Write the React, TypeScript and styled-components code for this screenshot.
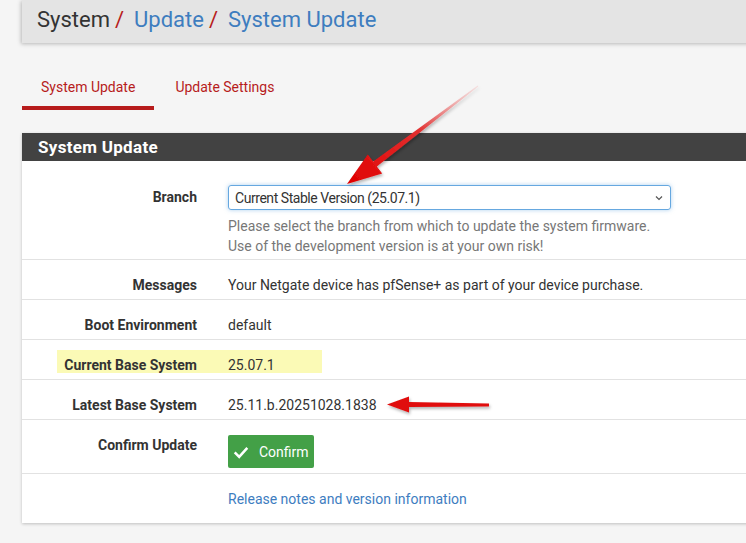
import React from "react";
import styled, { createGlobalStyle } from "styled-components";

const GlobalStyle = createGlobalStyle`
  html, body {
    margin: 0;
    padding: 0;
    background: #f5f5f5;
    font-family: Roboto, "Liberation Sans", sans-serif;
    color: #333;
    overflow: hidden;
  }
`;

const Page = styled.div`
  position: relative;
  width: 746px;
  height: 543px;
  padding-left: 22px;
  box-sizing: border-box;
`;

const Breadcrumb = styled.div`
  height: 43px;
  margin-right: -30px;
  background: #e4e4e4;
  box-shadow: -1px 1px 4px rgba(0, 0, 0, 0.25);
  display: flex;
  align-items: center;
  padding: 0 0 4px 15px;
  box-sizing: border-box;
  font-size: 22px;
`;

const Crumb = styled.span<{ $link?: boolean }>`
  color: ${(p) => (p.$link ? "#3e7dbf" : "#333")};
`;

const Slash = styled.span`
  color: #b71c1c;
  margin: 0 10px 0 5px;
`;

const Tabs = styled.div`
  display: flex;
  gap: 2px;
  margin-top: 30px;
`;

const Tab = styled.div<{ $active?: boolean }>`
  color: #b71c1c;
  font-size: 14px;
  padding: 6px 19px 11px;
  border-bottom: 4px solid ${(p) => (p.$active ? "#b71c1c" : "transparent")};
`;

const Panel = styled.div`
  margin-top: 23px;
  margin-right: -30px;
  background: #fff;
  box-shadow: 0 1px 3px rgba(0, 0, 0, 0.22);
`;

const PanelHeading = styled.div`
  background: #424242;
  color: #fff;
  height: 28px;
  display: flex;
  align-items: center;
  padding-left: 16px;
  font-size: 17px;
  font-weight: 700;
  letter-spacing: 0.3px;
`;

const Row = styled.div<{ $top: number; $bottom: number; $last?: boolean }>`
  position: relative;
  display: grid;
  grid-template-columns: 190px 1fr;
  padding: ${(p) => `${p.$top}px 0 ${p.$bottom}px`};
  border-bottom: ${(p) => (p.$last ? "none" : "1px solid #e2e2e2")};
`;

const Label = styled.div<{ $offset?: number }>`
  text-align: right;
  padding-right: 15px;
  padding-top: ${(p) => p.$offset ?? 0}px;
  font-weight: 700;
  font-size: 14px;
  line-height: 16px;
  position: relative;
`;

const Value = styled.div`
  padding-left: 16px;
  font-size: 14px;
  line-height: 16px;
  position: relative;
`;

const Highlight = styled.div`
  position: absolute;
  left: 35px;
  top: 10px;
  width: 265px;
  height: 23px;
  background: #fbfab6;
`;

const Select = styled.div`
  width: 443px;
  height: 25px;
  box-sizing: border-box;
  border: 1px solid #66a8e0;
  border-radius: 3px;
  box-shadow: 0 0 4px rgba(102, 168, 224, 0.55);
  display: flex;
  align-items: center;
  justify-content: space-between;
  padding: 0 6px;
  font-size: 14px;
  letter-spacing: -0.45px;
  color: #333;
`;

const Help = styled.div`
  margin-top: 6px;
  color: #777;
  font-size: 14px;
  line-height: 20px;
`;

const Button = styled.div`
  display: inline-flex;
  align-items: center;
  gap: 9px;
  height: 33px;
  padding: 0 5px 0 4px;
  box-sizing: border-box;
  background: #43a047;
  color: #fff;
  border-radius: 2px;
  font-size: 14px;
`;

const Link = styled.span`
  color: #3e7dbf;
  font-size: 14px;
`;

const Arrows = styled.svg`
  position: absolute;
  left: 0;
  top: 0;
  pointer-events: none;
`;

export default function App() {
  return (
    <>
      <GlobalStyle />
      <Page>
        <Breadcrumb>
          <Crumb>System</Crumb>
          <Slash>/</Slash>
          <Crumb $link>Update</Crumb>
          <Slash>/</Slash>
          <Crumb $link>System Update</Crumb>
        </Breadcrumb>

        <Tabs>
          <Tab $active>System Update</Tab>
          <Tab>Update Settings</Tab>
        </Tabs>

        <Panel>
          <PanelHeading>System Update</PanelHeading>

          <Row $top={24} $bottom={3}>
            <Label $offset={4}>Branch</Label>
            <Value>
              <Select>
                <span>Current Stable Version (25.07.1)</span>
                <svg width="10" height="10" viewBox="0 0 10 10">
                  <path d="M2 3.5 L5 6.5 L8 3.5" fill="none" stroke="#555" strokeWidth="1.2" />
                </svg>
              </Select>
              <Help>
                Please select the branch from which to update the system firmware.
                <br />
                Use of the development version is at your own risk!
              </Help>
            </Value>
          </Row>

          <Row $top={17} $bottom={6}>
            <Label>Messages</Label>
            <Value>Your Netgate device has pfSense+ as part of your device purchase.</Value>
          </Row>

          <Row $top={17} $bottom={6}>
            <Label>Boot Environment</Label>
            <Value>default</Value>
          </Row>

          <Row $top={17} $bottom={6}>
            <Highlight />
            <Label>Current Base System</Label>
            <Value>25.07.1</Value>
          </Row>

          <Row $top={17} $bottom={6}>
            <Label>Latest Base System</Label>
            <Value>25.11.b.20251028.1838</Value>
          </Row>

          <Row $top={15} $bottom={5}>
            <Label $offset={2}>Confirm Update</Label>
            <Value>
              <Button>
                <svg width="18" height="18" viewBox="0 0 20 20">
                  <path d="M3 10.5 L8 15.5 L17 5.5" fill="none" stroke="#fff" strokeWidth="2.8" />
                </svg>
                Confirm
              </Button>
            </Value>
          </Row>

          <Row $top={17} $bottom={16} $last>
            <Label />
            <Value>
              <Link>Release notes and version information</Link>
            </Value>
          </Row>
        </Panel>

        <Arrows width="746" height="543" viewBox="0 0 746 543">
          <defs>
            <linearGradient id="a1" x1="478" y1="86" x2="347" y2="184" gradientUnits="userSpaceOnUse">
              <stop offset="0" stopColor="#f4b0b0" stopOpacity="0.3" />
              <stop offset="0.45" stopColor="#e23030" />
              <stop offset="1" stopColor="#e00000" />
            </linearGradient>
            <filter id="sh" x="-20%" y="-20%" width="140%" height="140%">
              <feDropShadow dx="1" dy="2" stdDeviation="1.5" floodColor="#000" floodOpacity="0.3" />
            </filter>
          </defs>
          <g filter="url(#sh)">
            <polygon
              points="478.3,86.4 477.7,85.6 373.2,161.6 367.8,154.4 347,184 382.2,173.6 376.8,166.4"
              fill="url(#a1)"
            />
            <polygon
              points="489,403.5 489,406.5 409,407 409,412.5 387,404.5 409,396.5 409,402"
              fill="#e01010"
            />
          </g>
        </Arrows>
      </Page>
    </>
  );
}
